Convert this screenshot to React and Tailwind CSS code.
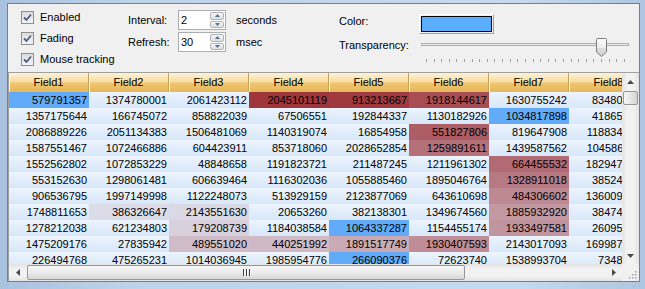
import React from 'react';

const rows = [
  ['579791357', '1374780001', '2061423112', '2045101119', '913213667', '1918144617', '1630755242', '834801937'],
  ['1357175644', '166745072', '858822039', '67506551', '192844337', '1130182926', '1034817898', '418651220'],
  ['2086889226', '2051134383', '1506481069', '1140319074', '16854958', '551827806', '819647908', '1188345521'],
  ['1587551467', '1072466886', '604423911', '853718060', '2028652854', '1259891611', '1439587562', '1045861173'],
  ['1552562802', '1072853229', '48848658', '1191823721', '211487245', '1211961302', '664455532', '1829470035'],
  ['553152630', '1298061481', '606639464', '1116302036', '1055885460', '1895046764', '1328911018', '385241716'],
  ['906536795', '1997149998', '1122248073', '513929159', '2123877069', '643610698', '484306602', '1360095428'],
  ['1748811653', '386326647', '2143551630', '20653260', '382138301', '1349674560', '1885932920', '384748821'],
  ['1278212038', '621234803', '179208739', '1184038584', '1064337287', '1154455174', '1933497581', '260958230'],
  ['1475209176', '27835942', '489551020', '440251992', '1891517749', '1930407593', '2143017093', '1699873126'],
  ['226494768', '475265231', '1014036945', '1985954776', '266090376', '72623740', '1538993704', '73480129'],
];

// cell state: 'sel' = blue highlight, number = heat (0..1)
const marks = {
  '0-0': 'sel', '1-6': 'sel', '8-4': 'sel', '10-4': 'sel',
  '0-3': 0.92, '0-4': 0.9, '0-5': 0.8,
  '2-5': 0.72, '3-5': 0.62,
  '4-6': 0.65, '5-6': 0.58, '6-6': 0.5,
  '7-1': 0.08, '7-2': 0.1, '7-6': 0.42,
  '8-2': 0.14, '8-6': 0.44,
  '9-2': 0.24, '9-3': 0.26, '9-4': 0.33, '9-5': 0.48,
};

const mix = (t) => {
  const a = [226, 236, 249];
  const b = [152, 38, 44];
  const c = a.map((v, i) => Math.round(v + (b[i] - v) * t));
  return `rgb(${c[0]},${c[1]},${c[2]})`;
};

function CheckBox({ label }) {
  return (
    <div className="flex items-center h-[13px] gap-[6px]">
      <div className="w-[13px] h-[13px] border border-[#8f8f8f] bg-[linear-gradient(#dcdcdc,#f4f4f4)] flex items-center justify-center">
        <svg width="9" height="9" viewBox="0 0 9 9">
          <path d="M1 4.5 L3.5 7 L8 1.5" fill="none" stroke="#4a5f86" strokeWidth="1.8" />
        </svg>
      </div>
      <span>{label}</span>
    </div>
  );
}

function Spin({ value }) {
  return (
    <div className="w-[48px] h-[20px] border border-[#abadb3] bg-white flex">
      <div className="flex-1 pl-[2px] leading-[18px]">{value}</div>
      <div className="w-[15px] flex flex-col py-[1px] pr-[1px] gap-[1px]">
        {[0, 1].map((i) => (
          <div key={i} className="flex-1 border border-[#b3b3b3] rounded-[2px] bg-[linear-gradient(#f6f6f6,#dedede)] flex items-center justify-center">
            <svg width="5" height="3" viewBox="0 0 5 3">
              <path d={i === 0 ? 'M0 3 L2.5 0 L5 3Z' : 'M0 0 L2.5 3 L5 0Z'} fill="#4d6fa3" />
            </svg>
          </div>
        ))}
      </div>
    </div>
  );
}

function Slider() {
  return (
    <div className="relative w-[208px] h-[25px] ml-[2px]">
      <div className="absolute left-0 right-0 top-[5px] h-[3px] border border-[#b2b2b2] bg-[#e8e8e8]" />
      <svg className="absolute left-[175px] top-0" width="11" height="19" viewBox="0 0 11 19">
        <defs>
          <linearGradient id="th" x1="0" y1="0" x2="0" y2="1">
            <stop offset="0" stopColor="#fbfbfb" />
            <stop offset="0.5" stopColor="#efefef" />
            <stop offset="0.55" stopColor="#dcdcdc" />
            <stop offset="1" stopColor="#cfcfcf" />
          </linearGradient>
        </defs>
        <path d="M1.5 0.5 H9.5 Q10.5 0.5 10.5 1.5 V14 L5.5 18.5 L0.5 14 V1.5 Q0.5 0.5 1.5 0.5Z" fill="url(#th)" stroke="#7d7d7d" />
      </svg>
      <div className="absolute left-[5px] right-[4px] top-[21px] flex justify-between">
        {Array.from({ length: 27 }).map((_, i) => (
          <div key={i} className="w-px h-[3px] bg-[#a0a0a0]" />
        ))}
      </div>
    </div>
  );
}

function ScrollArrow({ dir }) {
  const d = {
    up: 'M0 4 L3.5 0 L7 4Z',
    down: 'M0 0 L3.5 4 L7 0Z',
    left: 'M4 0 L0 3.5 L4 7Z',
    right: 'M0 0 L4 3.5 L0 7Z',
  }[dir];
  const vert = dir === 'up' || dir === 'down';
  return (
    <div className="w-[17px] h-[17px] shrink-0 flex items-center justify-center">
      <svg width={vert ? 7 : 4} height={vert ? 4 : 7} viewBox={vert ? '0 0 7 4' : '0 0 4 7'}>
        <path d={d} fill="#4a4a4a" />
      </svg>
    </div>
  );
}

export default function App() {
  return (
    <div className="w-[645px] h-[289px] overflow-hidden bg-[linear-gradient(90deg,#a9c2df,#bdd3ea_20%,#c6daef_80%,#aec6e1)] pt-[3px] pl-[7px] pr-[5px] pb-[7px] font-['Liberation_Sans',Arial,sans-serif] text-[11px] text-black">
      <div className="w-full h-full border border-[#6f8197] bg-[#f0f0f0] flex flex-col">
        {/* controls */}
        <div className="h-[68px] flex shrink-0">
          <div className="w-[120px] pl-[13px] pt-[7px] flex flex-col gap-[8px]">
            <CheckBox label="Enabled" />
            <CheckBox label="Fading" />
            <CheckBox label="Mouse tracking" />
          </div>
          <div className="w-[211px] pt-[6px] flex flex-col gap-[2px]">
            <div className="flex items-center h-[20px]">
              <span className="w-[50px]">Interval:</span>
              <Spin value="2" />
              <span className="ml-[10px]">seconds</span>
            </div>
            <div className="flex items-center h-[20px]">
              <span className="w-[50px]">Refresh:</span>
              <Spin value="30" />
              <span className="ml-[10px]">msec</span>
            </div>
          </div>
          <div className="flex-1 flex flex-col pt-[10px]">
            <div className="flex items-start h-[20px]">
              <span className="w-[80px] mt-[1px] leading-[13px]">Color:</span>
              <div className="w-[75px] h-[20px] border border-t-[#fff] border-l-[#fff] border-b-[#a0a0a0] border-r-[#a0a0a0] p-px">
                <div className="w-full h-full border border-black bg-[#5aadfd]" />
              </div>
            </div>
            <div className="flex items-start mt-[4px]">
              <span className="w-[80px] mt-px leading-[13px]">Transparency:</span>
              <Slider />
            </div>
          </div>
        </div>
        {/* grid */}
        <div className="flex-1 flex flex-col border-t border-l border-[#a0a0a0] min-h-0">
          <div className="flex flex-1 min-h-0">
            <div className="w-[613px] overflow-hidden flex flex-col">
              <div className="flex h-[19px] shrink-0">
                {Array.from({ length: 8 }).map((_, i) => (
                  <div key={i} className="w-[80px] shrink-0 h-full border-r border-[#c9a25a] bg-[linear-gradient(#fdf3da,#f8dca0_45%,#f0c56f_55%,#e7b65a)] shadow-[inset_1px_0_#fff6df] flex items-center justify-center">
                    Field{i + 1}
                  </div>
                ))}
              </div>
              <div className="flex-1 overflow-hidden">
                {rows.map((r, ri) => (
                  <div key={ri} className="flex h-[16px] bg-[linear-gradient(#ecf4fe,#e2edfb_50%,#d8e7f9)]">
                    {r.map((v, ci) => {
                      const m = marks[`${ri}-${ci}`];
                      const bg = m === 'sel' ? '#62abf9' : m !== undefined ? mix(m) : undefined;
                      return (
                        <div key={ci} className="w-[80px] shrink-0 text-right pr-[2px] leading-[16px] whitespace-nowrap overflow-visible" style={bg ? { background: bg } : undefined}>
                          {v}
                        </div>
                      );
                    })}
                  </div>
                ))}
              </div>
            </div>
            {/* vertical scrollbar */}
            <div className="w-[17px] shrink-0 flex flex-col bg-[linear-gradient(90deg,#e3e3e3,#f2f2f2_30%,#f2f2f2_70%,#e3e3e3)]">
              <ScrollArrow dir="up" />
              <div className="mx-[1px] h-[14px] mt-[1px] border border-[#979797] rounded-[2px] bg-[linear-gradient(90deg,#f6f6f6,#e6e6e6_50%,#d4d4d4)]" />
              <div className="flex-1" />
              <ScrollArrow dir="down" />
            </div>
          </div>
          {/* horizontal scrollbar */}
          <div className="h-[17px] shrink-0 flex">
            <div className="w-[613px] flex bg-[linear-gradient(#e3e3e3,#f2f2f2_30%,#f2f2f2_70%,#e3e3e3)]">
              <ScrollArrow dir="left" />
              <div className="w-[438px] my-[1px] ml-[1px] border border-[#979797] rounded-[2px] bg-[linear-gradient(#f8f8f8,#ebebeb_50%,#d7d7d7)] flex items-center justify-center">
                <div className="flex gap-[2px]">
                  {[0, 1, 2].map((i) => (
                    <div key={i} className="w-px h-[7px] bg-[#3d3d3d] shadow-[1px_0_#fff]" />
                  ))}
                </div>
              </div>
              <div className="flex-1" />
              <ScrollArrow dir="right" />
            </div>
            <div className="w-[17px] bg-[#f0f0f0] flex items-end justify-end p-[2px]">
              <svg width="10" height="10" viewBox="0 0 10 10">
                {[[8, 8], [5, 8], [2, 8], [8, 5], [5, 5], [8, 2]].map(([x, y], i) => (
                  <rect key={i} x={x} y={y} width="1.5" height="1.5" fill="#a5a5a5" />
                ))}
              </svg>
            </div>
          </div>
        </div>
      </div>
    </div>
  );
}
